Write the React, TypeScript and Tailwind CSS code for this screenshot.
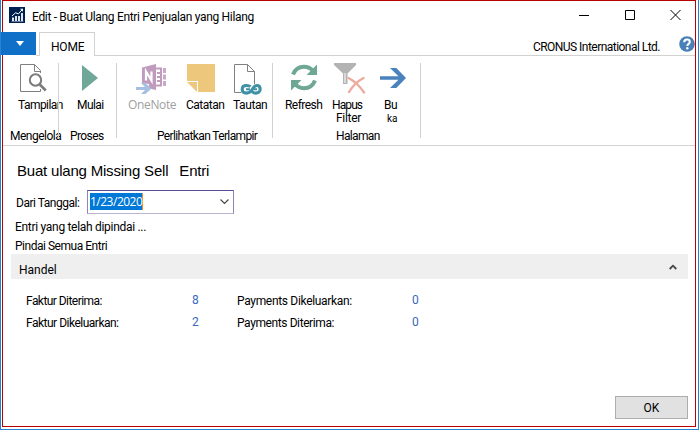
import type { ReactNode } from "react";

function AppLogo() {
  return (
    <svg width="16" height="16" viewBox="0 0 16 16" className="block">
      <rect width="16" height="16" fill="#00204f" />
      <path d="M3 10.500h2V14H3zM6 9h2v5H6zM9 9h2v5H9zM12 6h2v8h-2z" fill="#dfe6f0" />
      <path d="M2.500 14.500h12" stroke="#7f92b0" strokeWidth="0.800" />
      <path d="M3 9 6.500 5.800l3 1L13 2.800" stroke="#fff" strokeWidth="1" fill="none" />
      <path d="M11 1.800h3v3z" fill="#fff" />
    </svg>
  );
}

function PreviewIcon() {
  return (
    <svg width="28" height="29" viewBox="0 0 28 29" fill="none" className="block">
      <path d="M9 27.500H.500V.500h14l6 6V9M20.500 25v2.500H9M14.500.500v7h6" stroke="#808080" />
      <circle cx="15.500" cy="16" r="5.700" fill="#fff" stroke="#7b7b7b" strokeWidth="2" />
      <path d="m19.800 20.500 6 6" stroke="#7b7b7b" strokeWidth="2.600" />
    </svg>
  );
}

function OneNoteIcon() {
  return (
    <svg width="30" height="31" viewBox="0 0 30 31" fill="none" className="block">
      <path d="M20 3.500h6v19h-6v-2h4v-2.500h-3v-2h3v-2h-3v-2h3v-2h-3V8h3V5.500h-4z" fill="#c19bbe" />
      <path d="M27 4h3v5h-3zM27 10.500h3v5h-3zM27 17h3v5h-3z" fill="#c9a9c6" />
      <path d="M6 3.500 20 0v26L13 24.500V20l-7-1z" fill="#c19bbe" />
      <path d="M10 16.500v-9l5.500 9v-9" stroke="#fff" strokeWidth="2.200" />
      <path d="M0 23h9l-4-4h4.500l6 5.500-6 5.500H5l4-4H0z" fill="#a5c0e0" />
    </svg>
  );
}

function NoteIcon() {
  return (
    <svg width="28" height="28" viewBox="0 0 28 28" className="block">
      <path d="M0 0h28v28H11V17H0z" fill="#edc77c" />
      <path d="M0 18h10v10z" fill="#edc77c" />
    </svg>
  );
}

function LinkIcon() {
  return (
    <svg width="28" height="31" viewBox="0 0 28 31" fill="none" className="block">
      <path d="M7 28.500H.500V.500h13l7 7V20M13.500.500v7h7" stroke="#808080" />
      <path d="M16.500 22.700c-1-.9-2-1.200-4-1.200-2.700 0-4.300 1.600-4.300 3.800s1.600 3.800 4.300 3.800c2.500 0 3.900-1 4.900-2.400l1.900-2.800c1-1.500 2-2.400 3.500-2.400 2 0 3.400 1.500 3.400 3.800s-2 3.800-4.400 3.800c-1.500 0-2.500-.4-3.500-1.200" stroke="#3f91a5" strokeWidth="3.100" />
      <path d="M12 25.300h4M20 25.300h3" stroke="#3f91a5" strokeWidth="1.900" />
    </svg>
  );
}

function RefreshIcon() {
  return (
    <svg width="26" height="27" viewBox="0 0 26 27" className="block" fill="none">
      <path d="M2 10.500C4 5.500 8 2.800 13 2.800c4 0 7 1.600 9.300 4.400" stroke="#6fa795" strokeWidth="4" />
      <path d="M26 .500V11H15.500z" fill="#6fa795" />
      <path d="M24 16.500c-2 5-6 7.700-11 7.700-4 0-7-1.600-9.300-4.400" stroke="#6fa795" strokeWidth="4" />
      <path d="M0 26.500V16h10.500z" fill="#6fa795" />
    </svg>
  );
}

function ClearFilterIcon() {
  return (
    <svg width="32" height="31" viewBox="0 0 32 31" className="block" fill="none">
      <path d="M0 0h22v2l-8.500 8.500V21H9V10.500L0 2z" fill="#b3b3b3" />
      <path d="M11 10v10" stroke="#f4f4f4" strokeWidth="1.200" />
      <path d="M14.500 15c4 2 10.500 7 15.500 14.500M29.500 15C24 18 18.500 23 15 29" stroke="#edaa9d" strokeWidth="2.300" strokeLinecap="round" />
    </svg>
  );
}

function OpenIcon() {
  return (
    <svg width="26" height="20" viewBox="0 0 26 20" className="block">
      <path d="M0 8.200h18.500L10 0h6.300L26 10l-9.700 10H10l8.500-8.200H0z" fill="#4a82bd" />
    </svg>
  );
}

function Separator() {
  return <div className="h-[75px] w-px shrink-0 bg-[#d2d2d2]" />;
}

type ActionProps = { icon: ReactNode; slot: string; className: string; children: ReactNode };

function Action({ icon, slot, className, children }: ActionProps) {
  return (
    <button className={`flex shrink-0 flex-col items-start whitespace-nowrap text-left leading-[13px] ${className}`}>
      <span className={`block ${slot}`}>{icon}</span>
      {children}
    </button>
  );
}

type GroupProps = { width: string; label: string; labelClass: string; children: ReactNode };

function Group({ width, label, labelClass, children }: GroupProps) {
  return (
    <section className={`flex h-[82px] shrink-0 flex-col ${width}`}>
      <div className="flex h-[66px]">{children}</div>
      <div className={`whitespace-nowrap leading-[14px] ${labelClass}`}>{label}</div>
    </section>
  );
}

export default function App() {
  return (
    <div className="h-[430px] w-[699px] overflow-hidden border-x border-b border-[#2583cf] bg-white px-px pb-[2px] font-['Roboto','Liberation_Sans',sans-serif] text-[12px] text-black">
      <div className="flex h-[427px] w-[694px] flex-col border border-[#b80000]">
        <header className="flex h-[31px] shrink-0 pl-[6px]">
          <div className="pt-[6px]"><AppLogo /></div>
          <h1 className="ml-[7px] flex-1 whitespace-nowrap pt-2 leading-4 tracking-[-0.320px]">Edit - Buat Ulang Entri Penjualan yang Hilang</h1>
          <svg width="102" height="12" viewBox="0 0 102 12" className="mr-[14px] mt-[8px]" fill="none" stroke="#000">
            <path d="M0 6.500h10M46.500 1.500h9v9h-9zM91.500 1l10 10M101.500 1l-10 10" />
          </svg>
        </header>

        <nav className="flex h-[24px] shrink-0">
          <button className="-ml-[3px] flex h-[23px] w-[36px] items-center justify-center border-l-[3px] border-[#1070c8] bg-[#1070c8]">
            <svg width="8" height="5" viewBox="0 0 8 5"><path d="M0 0h8L4 5z" fill="#fff" /></svg>
          </button>
          <div className="w-[3px] border-b border-[#d2d2d2]" />
          <div className="w-[56px] border-x border-t border-[#d2d2d2] pl-[11px] pt-[6px] leading-4 tracking-[-0.200px]">HOME</div>
          <div className="flex flex-1 justify-end border-b border-[#d2d2d2]">
            <span className="mr-[19px] whitespace-nowrap pt-[7px] leading-4 tracking-[-0.530px]">CRONUS International Ltd.</span>
            <svg width="16" height="16" viewBox="0 0 16 16" className="mt-1">
              <circle cx="8" cy="8" r="7.800" fill="#4a80b8" />
              <path d="M5.200 6.300C5.200 4.500 6.300 3.600 8 3.600s2.800.9 2.800 2.400c0 1.800-2.500 2-2.500 4" stroke="#fff" strokeWidth="2" fill="none" />
              <circle cx="8.300" cy="12.200" r="1.200" fill="#fff" />
            </svg>
          </div>
        </nav>

        <div className="flex h-[90px] shrink-0 border-b border-[#d2d2d2] pt-[7px]">
          <Group width="w-[55px]" label="Mengelola" labelClass="pl-[7px] tracking-[-0.500px]">
            <Action className="ml-[15px] tracking-[-0.550px]" slot="h-[36px] pl-[2px] pt-px" icon={<PreviewIcon />}>Tampilan</Action>
          </Group>
          <Separator />
          <Group width="w-[57px]" label="Proses" labelClass="pl-[11px] tracking-[-0.600px]">
            <Action className="ml-[18px] tracking-[-0.600px]" slot="h-[36px] pl-[5px] pt-[2px]" icon={<svg width="16" height="26" viewBox="0 0 16 26" className="block"><path d="M0 0v26l16-13z" fill="#6fa898" /></svg>}>Mulai</Action>
          </Group>
          <Separator />
          <Group width="w-[155px]" label="Perlihatkan Terlampir" labelClass="pl-[40px] tracking-[-0.630px]">
            <Action className="ml-[11px] w-[58px] font-['Open_Sans'] tracking-[-0.350px] text-[#a0a0a0]" slot="h-[35px] pl-[8px] pt-px" icon={<OneNoteIcon />}>OneNote</Action>
            <Action className="w-[47px] tracking-[-0.500px]" slot="h-[36px] pl-px pt-px" icon={<NoteIcon />}>Catatan</Action>
            <Action className="tracking-[-0.400px]" slot="h-[36px] pl-px pt-px" icon={<LinkIcon />}>Tautan</Action>
          </Group>
          <Separator />
          <Group width="w-[147px]" label="Halaman" labelClass="pl-[63px] tracking-[-0.650px]">
            <Action className="ml-[12px] w-[47px] tracking-[-0.550px]" slot="h-[36px] pl-[6px] pt-px" icon={<RefreshIcon />}>Refresh</Action>
            <Action className="w-[48px]" slot="h-[36px] pl-[2px]" icon={<ClearFilterIcon />}>
              <span className="tracking-[-0.900px]">Hapus</span>
              <span className="pl-[4px] tracking-[-0.300px]">Filter</span>
            </Action>
            <Action className="" slot="h-[36px] pt-[5px]" icon={<OpenIcon />}>
              <span className="pl-[4px] tracking-[-0.500px]">Bu</span>
              <span className="pl-[7px] text-[10px]">ka</span>
            </Action>
          </Group>
          <Separator />
        </div>

        <main className="flex flex-1 flex-col">
          <h2 className="flex h-[44px] gap-[11px] pl-[14px] pt-[15px] font-['Liberation_Sans'] text-[15px] leading-5 tracking-[-0.200px]">
            <span>Buat ulang Missing Sell</span>
            <span>Entri</span>
          </h2>
          <div className="flex h-[24px] items-center">
            <label className="w-[84px] whitespace-nowrap pl-[13px] pt-px tracking-[-0.480px]">Dari Tanggal:</label>
            <div className="flex h-[24px] w-[147px] items-center border border-t-[#5b4a94] border-r-[#8f84b8] border-b-[#b9b5d0] border-l-[#8f84b8] px-[2px]">
              <span className="mb-px h-[17px] w-[53px] border-r border-[#ff8728] bg-[#0078d7] font-['Open_Sans'] leading-[17px] tracking-[-0.500px] text-white">1/23/2020</span>
              <svg width="9" height="6" viewBox="0 0 9 6" className="ml-auto mr-[2px]" fill="none"><path d="m.500.500 4 4 4-4" stroke="#444" strokeWidth="1.100" /></svg>
            </div>
          </div>
          <p className="mt-[5px] pl-[12px] leading-4 tracking-[-0.300px]">Entri yang telah dipindai ...</p>
          <p className="mt-[3px] pl-[12px] leading-4 tracking-[-0.480px]">Pindai Semua Entri</p>
          <div className="ml-[8px] mr-[7px] flex h-[25px] shrink-0 items-center justify-between bg-[#efefef] pl-[8px] pr-[11px]">
            <span className="pt-[7px] leading-4">Handel</span>
            <svg width="8" height="6" viewBox="0 0 8 6" fill="none"><path d="M.700 5 4 1.700 7.300 5" stroke="#444" strokeWidth="1.800" /></svg>
          </div>
          <div className="grid grid-cols-[166px_45px_175px_1fr] gap-y-[6px] whitespace-nowrap pl-[23px] pt-[14px] leading-4">
            <span className="tracking-[-0.550px]">Faktur Diterima:</span>
            <span className="-mt-px text-[#3668c0]">8</span>
            <span className="tracking-[-0.320px]">Payments Dikeluarkan:</span>
            <span className="-mt-px text-[#3668c0]">0</span>
            <span className="tracking-[-0.500px]">Faktur Dikeluarkan:</span>
            <span className="-mt-px text-[#3668c0]">2</span>
            <span className="tracking-[-0.400px]">Payments Diterima:</span>
            <span className="-mt-px text-[#3668c0]">0</span>
          </div>
          <button className="mb-[7px] ml-auto mr-[7px] mt-auto h-[23px] w-[73px] border border-[#adadad] bg-[#e1e1e1] leading-[20px]">OK</button>
        </main>
      </div>
    </div>
  );
}
